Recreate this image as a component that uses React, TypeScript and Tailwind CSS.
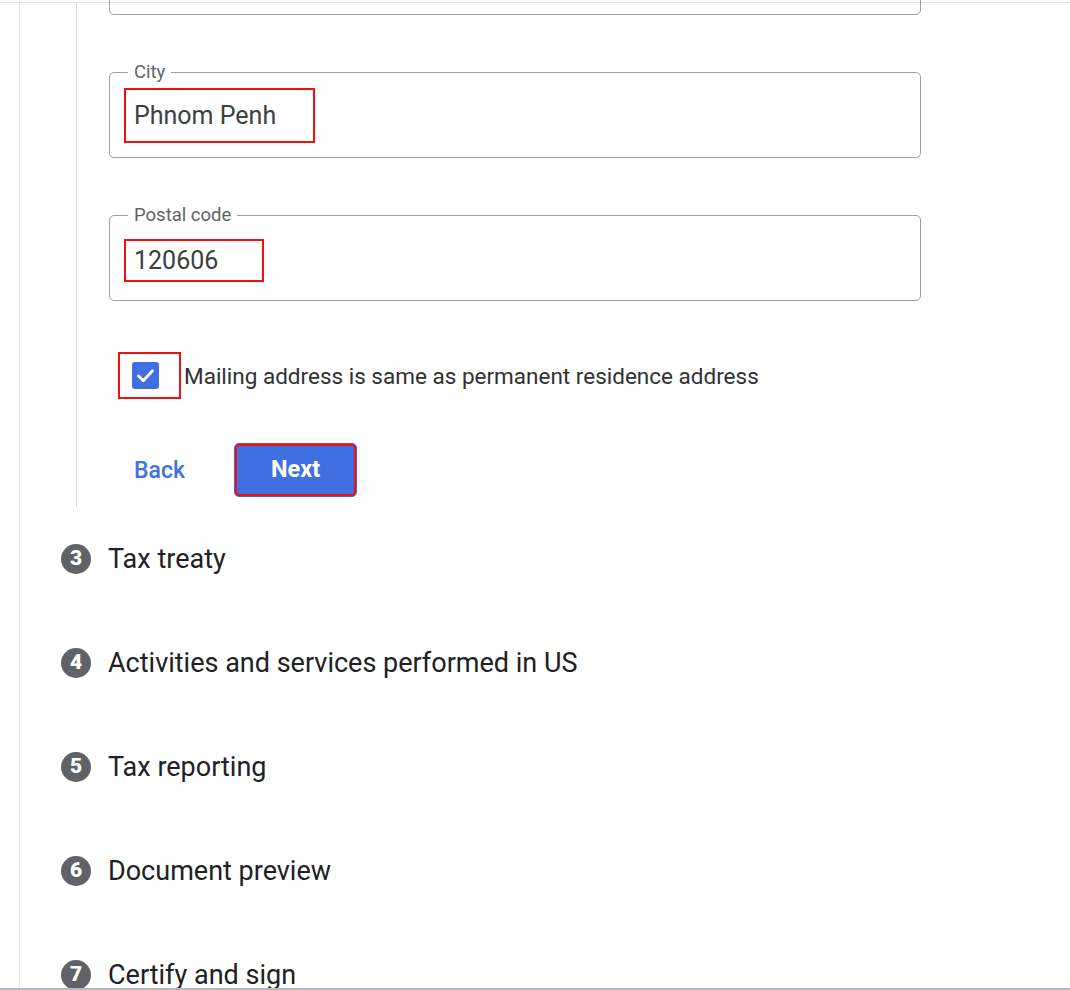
import React from "react";

const steps = [
  { n: 3, t: "Tax treaty" },
  { n: 4, t: "Activities and services performed in US" },
  { n: 5, t: "Tax reporting" },
  { n: 6, t: "Document preview" },
  { n: 7, t: "Certify and sign" },
];

function Field({ label, children, className }: { label?: string; children?: React.ReactNode; className?: string }) {
  return (
    <div className={"relative h-[86px] w-[812px] shrink-0 rounded-[5px] border border-[#9aa0a6] flex items-center " + (className ?? "")}>
      {label && (
        <span className="absolute left-[18px] top-[-13px] bg-white px-[6px] text-[18.5px] leading-[24px] text-[#5f6368]">
          {label}
        </span>
      )}
      {children}
    </div>
  );
}

export default function App() {
  return (
    <div
      className="relative w-[1070px] h-[990px] overflow-hidden bg-white"
      style={{ fontFamily: "Roboto, 'Noto Sans', sans-serif" }}
    >
      <div className="h-[2px]" />
      <div className="h-[1px] bg-[#e3e5e8]" />
      <div className="flex h-[987px]">
        <div className="w-[19px] shrink-0" />
        <div className="w-[1px] shrink-0 bg-[#e3e5e8]" />
        <div className="flex flex-1 flex-col">
          <div className="flex h-[504px] shrink-0">
            <div className="w-[56px] shrink-0" />
            <div className="w-[1px] shrink-0 bg-[#dadce0]" />
            <div className="flex flex-col pl-[32px] overflow-visible">
              <Field className="mt-[-74px]" />
              <Field label="City" className="mt-[57px]">
                <div className="ml-[14px] mt-[1px] flex h-[55px] w-[191px] items-center border-2 border-[#ee1111] pl-[8px] text-[25px] text-[#3c4043]">
                  Phnom Penh
                </div>
              </Field>
              <Field label="Postal code" className="mt-[57px]">
                <div className="ml-[14px] mt-[5px] flex h-[43px] w-[140px] items-center border-2 border-[#ee1111] pl-[8px] text-[25px] text-[#3c4043]">
                  120606
                </div>
              </Field>
              <div className="mt-[51px] flex h-[47px] items-center">
                <div className="ml-[9px] flex h-[47px] w-[63px] items-center border-2 border-[#ee1111] pl-[12px]">
                  <div className="flex h-[27px] w-[27px] items-center justify-center rounded-[3px] bg-[#3f6fe0]">
                    <svg width="21" height="21" viewBox="0 0 24 24" fill="none" stroke="white" strokeWidth="3.2" strokeLinecap="round" strokeLinejoin="round">
                      <polyline points="4,12.5 9.5,18 20,6.5" />
                    </svg>
                  </div>
                </div>
                <span className="ml-[3px] mt-[2px] text-[22.5px] text-[#303134]">
                  Mailing address is same as permanent residence address
                </span>
              </div>
              <div className="mt-[44px] flex h-[54px] items-center">
                <span className="ml-[25px] mt-[2px] w-[100px] text-[23px] font-medium text-[#3f74e0]">Back</span>
                <button className="flex h-[54px] w-[123px] items-center justify-center rounded-[5px] border border-[#4a60d4] bg-[#3f6fe0] text-[23.5px] font-bold text-white shadow-[inset_0_0_0_2px_#ee1111]">
                  Next
                </button>
              </div>
            </div>
          </div>
          <div className="flex flex-col">
            {steps.map((s) => (
              <div key={s.n} className="flex h-[104px] shrink-0 items-center">
                <div className="ml-[41px] flex h-[30px] w-[30px] items-center justify-center rounded-full bg-[#5f6368] text-[21px] font-black text-white">
                  {s.n}
                </div>
                <span className="ml-[17px] text-[27px] text-[#202124]">{s.t}</span>
              </div>
            ))}
          </div>
        </div>
      </div>
      <div className="absolute bottom-0 left-0 h-[2px] w-full bg-[#b4b7bc]" />
    </div>
  );
}
